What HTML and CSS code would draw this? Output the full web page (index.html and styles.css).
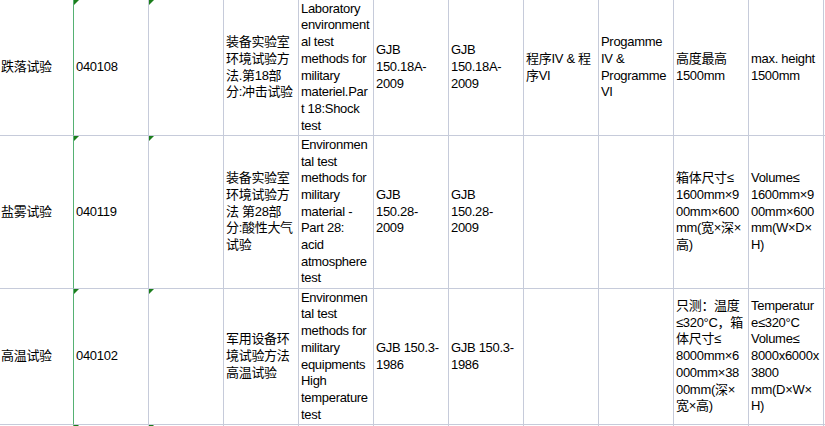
FILE: index.html
```html
<!DOCTYPE html>
<html lang="zh">
<head>
<meta charset="utf-8">
<title>试验项目</title>
<link rel="stylesheet" href="styles.css">
</head>
<body>
<div class="sheet">
  <!-- row 1 -->
  <div class="cell first">跌落试验</div>
  <div class="cell flag">040108</div>
  <div class="cell flag"></div>
  <div class="cell">装备实验室<br>环境试验方<br>法.第18部<br>分:冲击试验</div>
  <div class="cell">Laboratory<br>environment<br>al test<br>methods for<br>military<br>materiel.Par<br>t 18:Shock<br>test</div>
  <div class="cell">GJB<br>150.18A-<br>2009</div>
  <div class="cell">GJB<br>150.18A-<br>2009</div>
  <div class="cell">程序IV &amp; 程<br>序VI</div>
  <div class="cell">Progamme<br>IV &amp;<br>Programme<br>VI</div>
  <div class="cell">高度最高<br>1500mm</div>
  <div class="cell">max. height<br>1500mm</div>
  <div class="cell rest"></div>

  <!-- row 2 -->
  <div class="cell first">盐雾试验</div>
  <div class="cell flag">040119</div>
  <div class="cell flag"></div>
  <div class="cell">装备实验室<br>环境试验方<br>法 第28部<br>分:酸性大气<br>试验</div>
  <div class="cell">Environmen<br>tal test<br>methods for<br>military<br>material -<br>Part 28:<br>acid<br>atmosphere<br>test</div>
  <div class="cell">GJB<br>150.28-<br>2009</div>
  <div class="cell">GJB<br>150.28-<br>2009</div>
  <div class="cell"></div>
  <div class="cell"></div>
  <div class="cell">箱体尺寸≤<br>1600mm×9<br>00mm×600<br>mm(宽×深×<br>高)</div>
  <div class="cell">Volume≤<br>1600mm×9<br>00mm×600<br>mm(W×D×<br>H)</div>
  <div class="cell rest"></div>

  <!-- row 3 -->
  <div class="cell first">高温试验</div>
  <div class="cell flag">040102</div>
  <div class="cell flag"></div>
  <div class="cell">军用设备环<br>境试验方法<br>高温试验</div>
  <div class="cell">Environmen<br>tal test<br>methods for<br>military<br>equipments<br>High<br>temperature<br>test</div>
  <div class="cell">GJB 150.3-<br>1986</div>
  <div class="cell">GJB 150.3-<br>1986</div>
  <div class="cell"></div>
  <div class="cell"></div>
  <div class="cell">只测：温度<br>≤320°C，箱<br>体尺寸≤<br>8000mm×6<br>000mm×38<br>00mm(深×<br>宽×高)</div>
  <div class="cell">Temperatur<br>e≤320°C<br>Volume≤<br>8000x6000x<br>3800<br>mm(D×W×<br>H)</div>
  <div class="cell rest"></div>

  <!-- row 4 (cut off) -->
  <div class="cell first"></div>
  <div class="cell flag"></div>
  <div class="cell flag"></div>
  <div class="cell"></div>
  <div class="cell"></div>
  <div class="cell"></div>
  <div class="cell"></div>
  <div class="cell"></div>
  <div class="cell"></div>
  <div class="cell"></div>
  <div class="cell"></div>
  <div class="cell rest"></div>
</div>
</body>
</html>
```
FILE: styles.css
```css
html, body {
  margin: 0;
  padding: 0;
  background: #ffffff;
  overflow: hidden;
  height: 426px;
}

.sheet {
  display: grid;
  grid-template-columns: 74px repeat(10, 75px) 1fr;
  grid-template-rows: 136px 153px 136px 20px;
  font-family: "Liberation Sans", Arial, "Noto Sans CJK SC", sans-serif;
  font-size: 13px;
  letter-spacing: -0.3px;
  line-height: 16.7px;
  color: #000000;
}

.cell {
  position: relative;
  box-sizing: border-box;
  display: flex;
  align-items: center;
  padding-left: 2px;
  border-right: 1px solid #c6cbda;
  border-bottom: 1px solid #c6cbda;
  white-space: nowrap;
}

.cell.first {
  padding-left: 1px;
  border-right-color: #55b173;
}

.cell.rest {
  border-right: none;
}

.cell.flag::before {
  content: "";
  position: absolute;
  left: 0;
  top: 0;
  width: 0;
  height: 0;
  border-top: 5px solid #1b7d1b;
  border-right: 5px solid transparent;
}
```
